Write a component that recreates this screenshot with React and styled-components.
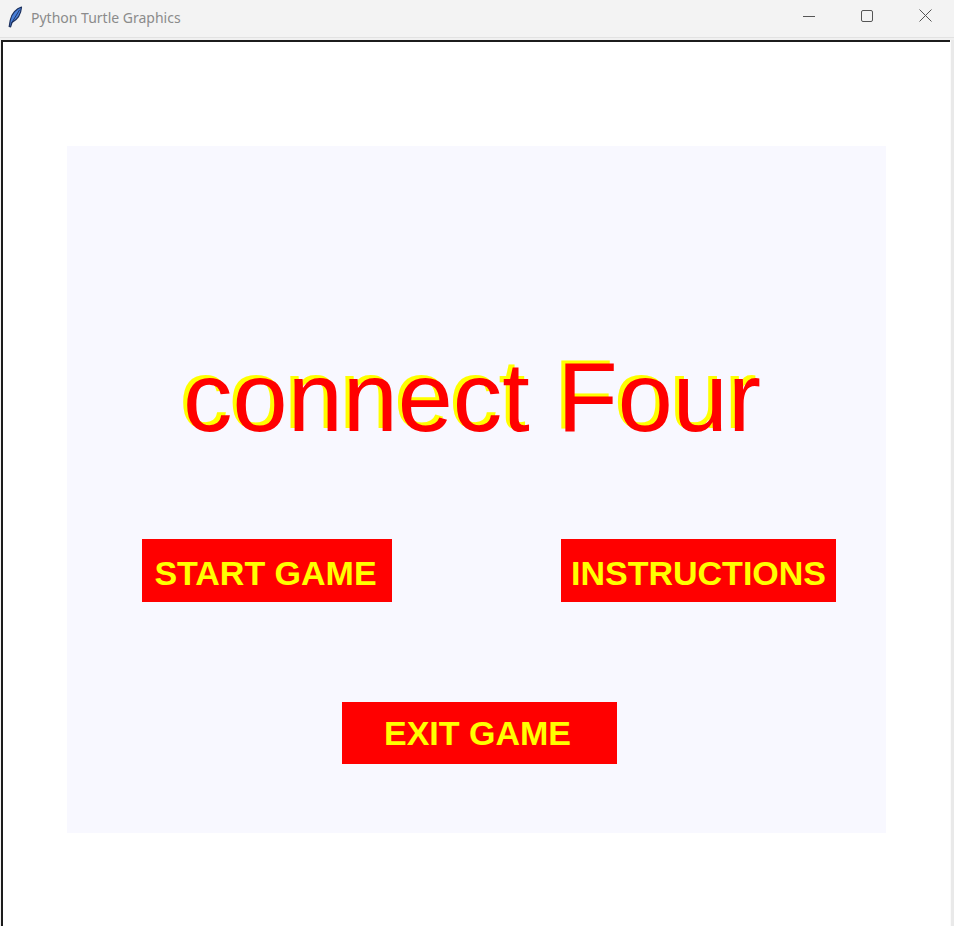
import React from "react";
import styled, { createGlobalStyle } from "styled-components";

const Global = createGlobalStyle`
  html, body { margin: 0; padding: 0; background: #ffffff; }
  body { font-family: "Liberation Sans", Arial, sans-serif; overflow: hidden; }
`;

const Window = styled.div`
  width: 954px;
  height: 926px;
  display: flex;
  flex-direction: column;
  background: #f0f0f0;
`;

const TitleBar = styled.div`
  height: 37px;
  flex: none;
  display: flex;
  align-items: center;
  background: #f3f3f3;
  border-bottom: 1px solid #e2e2e2;
`;

const AppIcon = styled.svg`
  width: 16px;
  height: 22px;
  margin-left: 7px;
  margin-right: 8px;
  margin-top: -3px;
`;

const Title = styled.span`
  font-family: "Noto Sans", "Segoe UI", sans-serif;
  font-size: 14px;
  color: #8b8b8b;
  margin-top: -3px;
  flex: 1;
`;

const Controls = styled.div`
  display: flex;
  height: 100%;
`;

const ControlButton = styled.div`
  width: 58px;
  height: 100%;
  display: flex;
  align-items: center;
  justify-content: center;
  margin-top: -3px;
`;

const Body = styled.div`
  flex: 1;
  display: flex;
  padding-top: 2px;
  padding-left: 1px;
  min-height: 0;
`;

const Canvas = styled.div`
  flex: 1;
  border-top: 2px solid #1c1c1c;
  border-left: 2px solid #1c1c1c;
  background: #ffffff;
  padding: 104px 0 0 64px;
  box-sizing: border-box;
`;

const RightEdge = styled.div`
  width: 3px;
  background: #e9e9e9;
  border-left: 1px solid #fafafa;
`;

const Panel = styled.div`
  width: 819px;
  height: 687px;
  background: #f8f8ff;
  display: flex;
  flex-direction: column;
  box-sizing: border-box;
  padding-top: 201px;
`;

const Heading = styled.h1`
  margin: 0;
  font-family: "Liberation Sans", Arial, sans-serif;
  font-weight: normal;
  font-size: 99px;
  line-height: 100px;
  color: #ff0000;
  text-shadow: -4px -3px 0 #ffff00;
  text-align: center;
  padding-right: 9px;
  white-space: nowrap;
`;

const ButtonRow = styled.div`
  display: flex;
  gap: ${(p) => p.$gap || 0}px;
  padding-left: ${(p) => p.$left}px;
  margin-top: ${(p) => p.$top}px;
`;

const MenuButton = styled.div`
  width: ${(p) => p.$width}px;
  height: ${(p) => p.$height}px;
  background: #ff0000;
  color: #ffff00;
  font-family: "Liberation Sans", Arial, sans-serif;
  font-weight: bold;
  font-size: 34px;
  line-height: 34px;
  display: flex;
  align-items: center;
  justify-content: center;
  box-sizing: border-box;
  padding-top: ${(p) => p.$shift || 0}px;
  padding-right: ${(p) => p.$nudge || 0}px;
  white-space: nowrap;
`;

const Feather = () => (
  <AppIcon viewBox="0 0 16 22">
    <path
      d="M14.5 1 C9.5 2.5 4.5 7.5 3.3 14 L2.2 20.5 L3.6 20.8 L5 16.5 C10.5 13.5 14 8 14.5 1 Z"
      fill="#4a80d8"
      stroke="#1b2f5c"
      strokeWidth="1.2"
      strokeLinejoin="round"
    />
    <path d="M12.6 3.8 L4.3 17.5" stroke="#1b2f5c" strokeWidth="0.9" />
  </AppIcon>
);

export default function App() {
  return (
    <>
      <Global />
      <Window>
        <TitleBar>
          <Feather />
          <Title>Python Turtle Graphics</Title>
          <Controls>
            <ControlButton>
              <svg width="12" height="12" viewBox="0 0 12 12">
                <line x1="0" y1="6.5" x2="12" y2="6.5" stroke="#555" strokeWidth="1" />
              </svg>
            </ControlButton>
            <ControlButton>
              <svg width="12" height="12" viewBox="0 0 12 12">
                <rect x="0.5" y="0.5" width="11" height="11" rx="1.5" fill="none" stroke="#555" strokeWidth="1" />
              </svg>
            </ControlButton>
            <ControlButton>
              <svg width="13" height="13" viewBox="0 0 13 13">
                <path d="M0.5 0.5 L12.5 12.5 M12.5 0.5 L0.5 12.5" stroke="#555" strokeWidth="1" />
              </svg>
            </ControlButton>
          </Controls>
        </TitleBar>
        <Body>
          <Canvas>
            <Panel>
              <Heading>connect Four</Heading>
              <ButtonRow $left={75} $gap={169} $top={92}>
                <MenuButton $width={250} $height={63} $shift={5} $nudge={3}>START GAME</MenuButton>
                <MenuButton $width={275} $height={63} $shift={5}>INSTRUCTIONS</MenuButton>
              </ButtonRow>
              <ButtonRow $left={275} $top={100}>
                <MenuButton $width={275} $height={62} $nudge={4}>EXIT GAME</MenuButton>
              </ButtonRow>
            </Panel>
          </Canvas>
          <RightEdge />
        </Body>
      </Window>
    </>
  );
}
